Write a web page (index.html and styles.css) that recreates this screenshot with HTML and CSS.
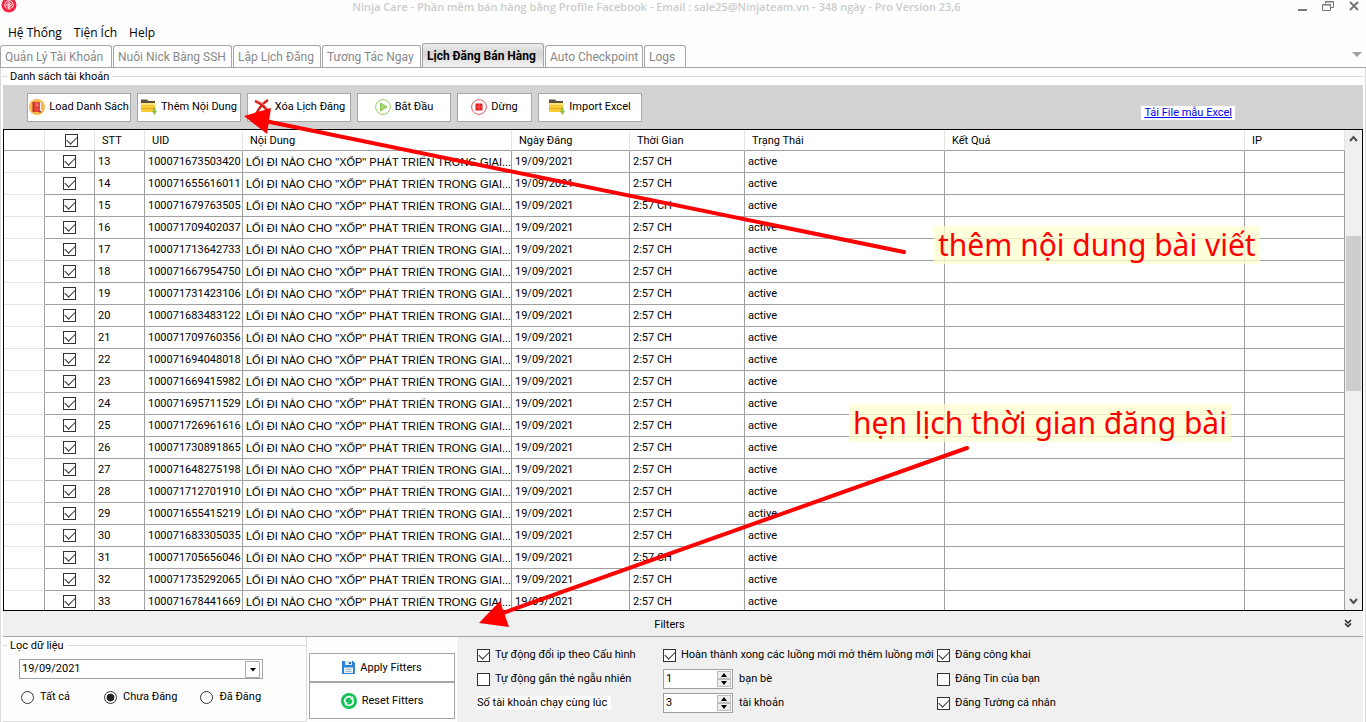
FILE: index.html
```html
<!DOCTYPE html>
<html lang="vi">
<head>
<meta charset="utf-8">
<title>Ninja Care</title>
<link rel="stylesheet" href="styles.css">
</head>
<body>
<header class="titlebar">
  <svg class="logo" width="16" height="16" viewBox="0 0 16 16"><circle cx="8" cy="5" r="7.5" fill="#f5233f"/><g fill="none" stroke="#fff" stroke-width="1"><path d="M5.6 8.3A4.2 4.2 0 1 1 10.4 8.3"/><path d="M6.3 6.3a2.2 2.2 0 1 1 3.4 0"/><path d="M7.2 9.500V6.200h1.600V9.500"/></g><circle cx="8" cy="4.800" r="1" fill="#fff"/></svg>
  <h1 class="title">Ninja Care - Phần mềm bán hàng bằng Profile Facebook - Email : sale25@Ninjateam.vn - 348 ngày - Pro Version 23,6</h1>
  <div class="window-buttons">
    <button aria-label="Minimize"><svg width="12" height="12"><path d="M2 10h9" stroke="#777" stroke-width="2"/></svg></button>
    <button aria-label="Restore"><svg width="12" height="12" fill="none" stroke="#777"><path d="M3.500 3.500V1.500h8v6h-3M3.500 2h8M.5 4.500h8v6h-8zM.5 5h8"/></svg></button>
    <button aria-label="Close"><svg width="12" height="12"><path d="M2 2l8 8M10 2l-8 8" stroke="#777" stroke-width="2"/></svg></button>
  </div>
</header>
<nav class="menu">
  <button>Hệ Thống</button><button>Tiện Ích</button><button>Help</button>
</nav>
<div class="tabs" role="tablist">
  <button class="tab tab-accounts" role="tab">Quản Lý Tài Khoản</button>
  <button class="tab tab-nurture" role="tab">Nuôi Nick Bằng SSH</button>
  <button class="tab tab-schedule" role="tab">Lập Lịch Đăng</button>
  <button class="tab tab-interact" role="tab">Tương Tác Ngay</button>
  <button class="tab tab-active" role="tab" aria-selected="true">Lịch Đăng Bán Hàng</button>
  <button class="tab tab-check" role="tab">Auto Checkpoint</button>
  <button class="tab tab-logs" role="tab">Logs</button>
  <button class="tabs-more" aria-label="More tabs"><svg width="10" height="6"><path d="M0 0h10L5 5z" fill="#a0a0a0"/></svg></button>
</div>
<main class="group">
  <h2 class="legend">Danh sách tài khoản</h2>
  <div class="toolbar">
    <button class="tool"><svg width="16" height="16"><circle cx="8" cy="8" r="8" fill="#f9b84b"/><path d="M4 3h7v10H4z" fill="#e2453c"/><path d="M3.500 3H5v10H3.500z" fill="#b82f2c"/><path d="M11 3h1v10h-1z" fill="#eee"/><path d="M6.500 5h3M6.500 6.500h3" stroke="#f58a78"/><path d="M10 12v2l1-1 1 1v-2z" fill="#734047"/></svg>Load Danh Sách</button>
    <button class="tool"><svg width="16" height="16"><path d="M0 2V.5h6L7.500 2H14v3H0z" fill="#55503c"/><path d="M0 4h14v9H0z" fill="#f7c934"/><path d="M0 4h14v2H0z" fill="#ffe27a"/><path d="M0 9h14v1H0z" fill="#e7a91c"/><path d="M12.500 8.500h2V12H16l-2.500 4L11 12h1.500z" fill="#86bd3e"/></svg>Thêm Nội Dung</button>
    <button class="tool"><svg width="18" height="16"><path d="M2 2c6 2 10 6 14 12M15 1C9 5 6 9 3 15" stroke="#d6201d" stroke-width="2.500" fill="none"/><path d="M3 1.500c6 2 9 5 12 9" stroke="#ef6a61" fill="none"/></svg>Xóa Lịch Đăng</button>
    <button class="tool tool-start"><svg width="16" height="16"><circle cx="8" cy="8" r="7.400" fill="#fff" stroke="#9ccc65"/><path d="M5.500 4v8L12 8z" fill="#a8d280" stroke="#8bc34a"/></svg>Bắt Đầu</button>
    <button class="tool tool-stop"><svg width="16" height="16"><circle cx="8" cy="8" r="7.400" fill="#fff" stroke="#e05c5c"/><path d="M4.500 4.500h7v7h-7z" fill="#e31e24"/><path d="M4.500 8h7M8 4.500v7" stroke="#ff5753"/></svg>Dừng</button>
    <button class="tool"><svg width="16" height="16"><path d="M0 2V.5h6L7.500 2H14v3H0z" fill="#55503c"/><path d="M0 4h14v9H0z" fill="#f7c934"/><path d="M0 4h14v2H0z" fill="#ffe27a"/><path d="M0 9h14v1H0z" fill="#e7a91c"/><path d="M12.500 8.500h2V12H16l-2.500 4L11 12h1.500z" fill="#86bd3e"/></svg>Import Excel</button>
    <a class="sample" href="#">Tải File mẫu Excel</a>
  </div>
  <div class="grid-view">
    <div class="grid-rows">
      <table class="grid">
        <colgroup><col class="c-row"><col class="c-check"><col class="c-stt"><col class="c-uid"><col class="c-text"><col class="c-date"><col class="c-time"><col class="c-state"><col><col class="c-ip"></colgroup>
        <thead><tr><th></th><th class="check"><input type="checkbox" checked aria-label="Chọn tất cả"></th><th>STT</th><th>UID</th><th>Nội Dung</th><th>Ngày Đăng</th><th>Thời Gian</th><th>Trạng Thái</th><th>Kết Quả</th><th>IP</th></tr></thead>
        <tbody id="rows"></tbody>
      </table>
    </div>
    <div class="scrollbar">
      <svg width="15" height="17"><path d="M4 11l3.500-4L11 11" fill="none" stroke="#505050" stroke-width="2"/></svg>
      <div class="track"><div class="thumb"></div></div>
      <svg width="15" height="17"><path d="M4 6l3.500 4L11 6" fill="none" stroke="#505050" stroke-width="2"/></svg>
    </div>
  </div>
  <div class="filters-bar"><span>Filters</span><button aria-label="Collapse"><svg width="8" height="9" fill="none" stroke="#222" stroke-width="1.500"><path d="M1 1l3 3 3-3M1 4.500l3 3 3-3"/></svg></button></div>
  <div class="bottom">
    <section class="filter-box">
      <h3 class="legend">Lọc dữ liệu</h3>
      <div class="date-select">
        <select aria-label="Ngày đăng"><option>19/09/2021</option></select>
        <svg width="15" height="17"><path d="M.5 .5h14v16H.5z" fill="#fff" stroke="#aaa"/><path d="M5 7h6l-3 3.500z" fill="#000"/></svg>
      </div>
      <div class="radios">
        <label><input type="radio" name="state">Tất cả</label>
        <label><input type="radio" name="state" checked>Chưa Đăng</label>
        <label><input type="radio" name="state">Đã Đăng</label>
      </div>
    </section>
    <div class="filter-actions">
      <button class="apply"><svg width="13" height="13"><path d="M0 0h11l2 2v11H0z" fill="#2c82d8"/><path d="M3 0h7v4H3z" fill="#d9e6ef"/><path d="M7 1h2v2H7z" fill="#2c6aa0"/><path d="M2 6.500h9V12H2z" fill="#eef1f2"/><path d="M3.500 8.500h6M3.500 10.500h6" stroke="#9cb6ca"/></svg>Apply Fitters</button>
      <button class="reset"><svg width="16" height="16"><circle cx="8" cy="8" r="8" fill="#13c257"/><path d="M4 9.500A4.200 4.200 0 0 1 10.500 4.600M12 6.500A4.200 4.200 0 0 1 5.500 11.400" fill="none" stroke="#fff" stroke-width="1.600"/><path d="M9 6.500l3.500.3-.6-3.800zM7 9.500l-3.500-.3.600 3.800z" fill="#fff"/></svg>Reset Fitters</button>
    </div>
    <section class="options">
      <div class="option-col col-a">
        <label><input type="checkbox" checked>Tự động đổi ip theo Cấu hình</label>
        <label><input type="checkbox">Tự động gắn thẻ ngẫu nhiên</label>
        <span class="count-label">Số tài khoản chạy cùng lúc</span>
      </div>
      <div class="option-col col-b">
        <label><input type="checkbox" checked>Hoàn thành xong các luồng mới mở thêm luồng mới</label>
        <div class="number-row"><div class="spinner"><input id="friends" type="number" value="1"><span class="steps"><button aria-label="Tăng bạn bè"><svg width="8" height="4"><path d="M1 4l3-4 3 4z"/></svg></button><button aria-label="Giảm bạn bè"><svg width="8" height="4"><path d="M1 0l3 4 3-4z"/></svg></button></span></div><label for="friends">bạn bè</label></div>
        <div class="number-row"><div class="spinner"><input id="accounts" type="number" value="3"><span class="steps"><button aria-label="Tăng tài khoản"><svg width="8" height="4"><path d="M1 4l3-4 3 4z"/></svg></button><button aria-label="Giảm tài khoản"><svg width="8" height="4"><path d="M1 0l3 4 3-4z"/></svg></button></span></div><label for="accounts">tài khoản</label></div>
      </div>
      <div class="option-col">
        <label><input type="checkbox" checked>Đăng công khai</label>
        <label><input type="checkbox">Đăng Tin của bạn</label>
        <label><input type="checkbox" checked>Đăng Tường cá nhân</label>
      </div>
    </section>
  </div>
</main>
<svg class="arrows" width="1366" height="722" fill="#f00" stroke="#f00" stroke-linecap="round"><path d="M265 121L904 252M503 613L967 448" stroke-width="4"/><path d="M244 116l27-8-4 26zM479 623l21-22 9 26z" stroke="none"/></svg>
<p class="note note-content">thêm nội dung bài viết</p>
<p class="note note-time">hẹn lịch thời gian đăng bài</p>
<script src="app.js"></script>
</body>
</html>
```
FILE: styles.css
```css
* { box-sizing: border-box; }
body {
  margin: 0;
  height: 100vh;
  display: flex;
  flex-direction: column;
  position: relative;
  overflow: hidden;
  background: #fefefe;
  color: #000;
  font: 12px/16px Roboto, "Liberation Sans", sans-serif;
}
button, input, select { font: inherit; color: inherit; margin: 0; }
button { background: none; border: 0; padding: 0; }
h1, h2, h3, p { margin: 0; font-weight: 400; font-size: inherit; }
svg { flex: none; display: block; }

.titlebar { height: 22px; display: flex; align-items: flex-start; }
.logo { margin-left: 1px; }
.title {
  flex: 1;
  text-align: center;
  font: 600 11px/14px "Open Sans", sans-serif;
  color: #ccc;
}
.window-buttons { display: flex; gap: 14px; padding-right: 6px; }

.menu { height: 22px; display: flex; gap: 12px; padding-left: 8px; font: 12px/22px "Open Sans", sans-serif; }

.tabs { height: 24px; display: flex; align-items: flex-end; gap: 1px; border-bottom: 1px solid #a5a5a5; }
.tab {
  height: 22px;
  padding: 1px 0 0 4px;
  text-align: left;
  white-space: nowrap;
  color: #888;
  background: #fff;
  border: 1px solid #a5a5a5;
  border-bottom: 0;
  border-radius: 3px 3px 0 0;
}
.tab-accounts { width: 112px; }
.tab-nurture { width: 119px; }
.tab-schedule { width: 88px; }
.tab-interact { width: 99px; }
.tab-active {
  width: 122px;
  height: 24px;
  color: #000;
  font-weight: 700;
  background: linear-gradient(#eee, #d4d4d4 40%, #f4f4f4);
}
.tab-check { width: 98px; }
.tab-logs { width: 42px; }
.tabs-more { margin: 0 4px 9px auto; }

.group {
  flex: 1;
  min-height: 0;
  display: flex;
  flex-direction: column;
  padding: 0 2px;
  border-left: 1px solid #dcdcdc;
  border-right: 1px solid #dcdcdc;
  font-size: 11px;
}
.legend { display: flex; align-items: center; gap: 3px; line-height: 17px; white-space: nowrap; }
.legend::before { content: ""; width: 4px; border-top: 1px solid #dcdcdc; }
.legend::after { content: ""; flex: 1; border-top: 1px solid #dcdcdc; }

.toolbar { height: 44px; display: flex; align-items: center; gap: 6px; padding: 0 128px 0 24px; background: #d3d3d3; }
.tool {
  width: 104px;
  height: 29px;
  display: flex;
  align-items: center;
  justify-content: center;
  gap: 4px;
  white-space: nowrap;
  background: #fff;
  border: 1px solid #a8a8a8;
}
.tool-start { width: 94px; }
.tool-stop { width: 75px; }
.sample { margin: 12px 0 0 auto; padding: 0 3px; line-height: 14px; background: #fff; color: #00f; }

.grid-view { flex: 1; min-height: 0; display: flex; border: 1px solid #000; background: #fff; }
.grid-rows { flex: 1; overflow: hidden; }
.grid { width: 100%; table-layout: fixed; border-collapse: separate; border-spacing: 0; }
.grid th, .grid td {
  height: 22px;
  padding: 1px 3px 0;
  text-align: left;
  font-weight: 400;
  white-space: nowrap;
  overflow: hidden;
  border: solid #a0a0a0;
  border-width: 0 1px 1px 0;
}
.grid th { height: 21px; padding-top: 2px; padding-left: 7px; border-right-color: #e5e5e5; }
.grid td:first-child { border-bottom-color: #e5e5e5; }
.grid .check { padding-top: 0; padding-left: 18px; }
.grid th.check { padding-left: 20px; }
.grid .post { padding-top: 0; padding-right: 0; font-family: "Liberation Sans", sans-serif; }
.grid .c-row { width: 41px; }
.grid .c-check, .grid .c-stt { width: 50px; }
.grid .c-uid { width: 98px; }
.grid .c-text { width: 269px; }
.grid .c-date { width: 118px; }
.grid .c-time { width: 115px; }
.grid .c-state { width: 200px; }
.grid .c-ip { width: 100px; }

.scrollbar { width: 17px; display: flex; flex-direction: column; padding: 0 1px; background: #f0f0f0; }
.track { flex: 1; padding-top: 89px; }
.thumb { height: 155px; background: #cdcdcd; }

input[type="checkbox"], input[type="radio"] {
  appearance: none;
  flex: none;
  display: block;
  width: 13px;
  height: 13px;
  background: #fff;
  border: 1px solid #333;
}
input[type="checkbox"]:checked::before {
  content: "";
  display: block;
  width: 9px;
  height: 5px;
  margin: 2px 1px;
  border: solid #333;
  border-width: 0 0 1px 1px;
  transform: translateY(-1px) rotate(-45deg);
}
input[type="radio"] { border-radius: 50%; }
input[type="radio"]:checked { background: radial-gradient(#222 45%, #fff 55%); }
label { display: flex; align-items: center; white-space: nowrap; }

.filters-bar { height: 26px; flex: none; display: flex; align-items: center; background: #f0f0f0; border-bottom: 1px solid #a5a5a5; }
.filters-bar span { flex: 1; text-align: center; padding: 2px 8px 0 0; }
.filters-bar button { margin-right: 11px; }

.bottom { flex: none; display: flex; }
.filter-box { width: 304px; height: 85px; border-right: 1px solid #dcdcdc; border-bottom: 1px solid #dcdcdc; }
.date-select { display: flex; align-items: center; width: 244px; height: 20px; margin: 5px 0 0 16px; padding-right: 2px; border: 1px solid #a0a0a0; background: #fff; }
.date-select select { flex: 1; appearance: none; border: 0; background: none; padding: 0 2px; }
.radios { display: flex; gap: 23px; margin: 10px 0 0 18px; }
.radios label { gap: 6px; }
.radios label:first-child { margin-right: 11px; }
.filter-actions { width: 150px; display: flex; flex-direction: column; padding: 16px 2px 2px; }
.filter-actions button { display: flex; align-items: center; justify-content: center; gap: 5px; border: 1px solid #a5a5a5; background: #fff; }
.apply { height: 29px; }
.reset { height: 37px; }

.options { flex: 1; display: flex; padding: 6px 0 0 20px; background: #f0f0f0; }
.option-col { display: grid; grid-template-rows: repeat(3, 24px); align-items: center; align-content: start; justify-items: start; }
.option-col label { gap: 5px; }
.col-a { width: 186px; }
.col-b { width: 274px; }
.count-label { background: #fff; padding-right: 4px; line-height: 14px; }
.number-row { display: flex; align-items: center; gap: 6px; }
.spinner { width: 70px; height: 20px; display: flex; padding: 1px; background: #fff; border: 1px solid #a0a0a0; }
.spinner input { flex: 1; min-width: 0; padding: 0 1px; border: 0; background: none; appearance: textfield; }
.spinner input::-webkit-inner-spin-button { display: none; }
.steps { width: 14px; display: flex; flex-direction: column; }
.steps button { flex: 1; display: flex; align-items: center; justify-content: center; border: 1px solid #bbb; background: #eee; }

.arrows { position: absolute; left: 0; top: 0; pointer-events: none; }
.note {
  position: absolute;
  padding: 0 4px;
  white-space: nowrap;
  color: #f00;
  background: rgba(255, 255, 208, 0.75);
  font: 30px/38px "Noto Sans", sans-serif;
}
.note-content { left: 934px; top: 226px; }
.note-time { left: 849px; top: 404px; }
```
FILE: app.js
```js
const uids = ["100071673503420", "100071655616011", "100071679763505", "100071709402037", "100071713642733", "100071667954750", "100071731423106", "100071683483122", "100071709760356", "100071694048018", "100071669415982", "100071695711529", "100071726961616", "100071730891865", "100071648275198", "100071712701910", "100071655415219", "100071683305035", "100071705656046", "100071735292065", "100071678441669"];
document.getElementById("rows").innerHTML = uids.map((uid, i) => `<tr><td></td><td class="check"><input type="checkbox" checked aria-label="Chọn ${i + 13}"></td><td>${i + 13}</td><td>${uid}</td><td class="post">LỐI ĐI NÀO CHO "XỐP" PHÁT TRIỂN TRONG GIAI...</td><td>19/09/2021</td><td>2:57 CH</td><td>active</td><td></td><td></td></tr>`).join("");
```
